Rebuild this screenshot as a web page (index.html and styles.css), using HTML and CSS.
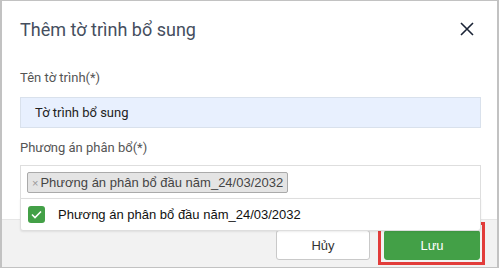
FILE: index.html
```html
<!DOCTYPE html>
<html lang="vi">
<head>
<meta charset="utf-8">
<link rel="stylesheet" href="styles.css">
</head>
<body>
<div class="modal">
  <div class="header">
    <div class="title">Thêm tờ trình bổ sung</div>
    <svg class="close" width="14" height="14" viewBox="0 0 14 14"><path d="M1 1L13 13M13 1L1 13" stroke="#1b2436" stroke-width="1.6" fill="none"/></svg>
  </div>
  <div class="body">
    <div class="label">Tên tờ trình(*)</div>
    <div class="input">Tờ trình bổ sung</div>
    <div class="label label2">Phương án phân bổ(*)</div>
    <div class="select">
      <span class="tag"><span class="tag-x">×</span>Phương án phân bổ đầu năm_24/03/2032</span>
      <div class="dropdown">
        <div class="option">
          <span class="check"><svg width="11" height="9" viewBox="0 0 11 9"><path d="M1 4.5L4 7.5L10 1.5" stroke="#fff" stroke-width="1.6" fill="none"/></svg></span>
          <span class="opt-text">Phương án phân bổ đầu năm_24/03/2032</span>
        </div>
      </div>
    </div>
  </div>
  <div class="footer">
    <button class="btn btn-cancel">Hủy</button>
    <span class="highlight"><button class="btn btn-save">Lưu</button></span>
  </div>
</div>
</body>
</html>
```
FILE: styles.css
```css
* { box-sizing: border-box; }
html, body { margin: 0; padding: 0; background: #fff; }
body { width: 499px; height: 268px; overflow: hidden; }
.modal {
  width: 499px; height: 268px;
  border: 1px solid #c2c2c2;
  border-left-width: 2px;
  border-right-width: 2px;
  display: flex; flex-direction: column;
  font-family: Roboto, "Liberation Sans", sans-serif;
}
.header {
  height: 57px; flex: none;
  display: flex; align-items: center; justify-content: space-between;
  padding: 0 23px 0 18px;
}
.title { font-size: 18px; color: #454e5e; margin-top: -1px; }
.close { display: block; margin-top: -2px; }
.body { padding: 12px 16px 20px 18px; flex: none; }
.label { font-size: 13px; line-height: 16px; color: #555; }
.input {
  margin-top: 11px; height: 31px;
  background: #e8f0fe; border: 1px solid #d9e1ec;
  padding-left: 14px; font-size: 13px; line-height: 29px; color: #222;
}
.label2 { margin-top: 12px; }
.select {
  position: relative; margin-top: 9px; height: 34px;
  border: 1px solid #dedede; padding: 6px 0 0 6px;
}
.tag {
  display: inline-block; height: 21px; line-height: 19px;
  background: #e4e4e4; border: 1px solid #aaa; border-radius: 2px;
  padding: 0 4px 0 4px; font-family: "Liberation Sans", Arial, sans-serif;
  font-size: 13px; color: #444;
}
.tag-x { color: #999; font-size: 11px; margin-right: 2px; }
.dropdown {
  position: absolute; left: -1px; right: -1px; top: 32px;
  height: 33px; background: #fff;
  border: 1px solid #dedede;
  border-radius: 0 0 3px 3px;
  box-shadow: 0 1px 2px rgba(0,0,0,0.08);
  z-index: 2;
}
.option { display: flex; align-items: center; height: 31px; padding-left: 7px; }
.check {
  width: 17px; height: 17px; background: #43a047; border-radius: 3px;
  display: flex; align-items: center; justify-content: center; flex: none;
}
.opt-text { margin-left: 13px; font-family: "Liberation Sans", Arial, sans-serif; font-size: 13px; color: #111; }
.footer {
  flex: 1; background: #f2f2f2; border-top: 1px solid #e6e6e6;
  display: flex; justify-content: flex-end; align-items: flex-start;
  padding: 10px 17px 0 0; gap: 14px;
}
.btn {
  height: 30px; font-family: "Liberation Sans", Arial, sans-serif; font-size: 13px;
  border-radius: 3px; cursor: pointer; padding: 0;
}
.btn-cancel { width: 94px; background: #fff; border: 1px solid #c9c9c9; color: #333; }
.highlight { position: relative; display: block; }
.highlight::after {
  content: ""; position: absolute; top: -8px; left: -6px; right: -5px; bottom: -5px;
  border: 3px solid #e23c3a; pointer-events: none;
}
.btn-save { display: block; width: 96px; background: #43a047; border: 1px solid #43a047; color: #fff; }
```
